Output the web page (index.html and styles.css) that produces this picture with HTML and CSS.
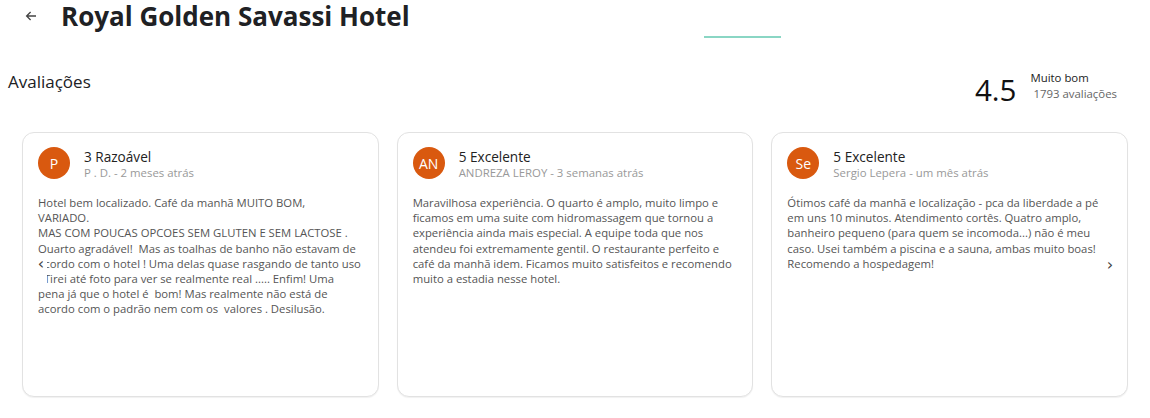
FILE: index.html
```html
<!DOCTYPE html>
<html lang="pt">
<head>
<meta charset="utf-8">
<link rel="stylesheet" href="styles.css">
</head>
<body>
<header class="top">
  <span class="back">
    <svg width="12" height="12" viewBox="0 0 12 12"><path d="M11 6H1.6M5.6 2L1.6 6l4 4" fill="none" stroke="#444" stroke-width="1.3"/></svg>
  </span>
  <h1 class="title">Royal Golden Savassi Hotel</h1>
</header>
<div class="tab-line"></div>
<section class="reviews-head">
  <h2 class="reviews-title">Avaliações</h2>
  <div class="score">
    <span class="score-num">4.5</span>
    <div class="score-info">
      <span class="score-label">Muito bom</span>
      <span class="score-count">1793 avaliações</span>
    </div>
  </div>
</section>
<div class="carousel">
  <article class="card">
    <div class="card-head">
      <div class="avatar">P</div>
      <div>
        <div class="rating">3 Razoável</div>
        <div class="meta">P . D. - 2 meses atrás</div>
      </div>
    </div>
    <p class="text">Hotel bem localizado. Café da manhã MUITO BOM,<br>VARIADO.<br>MAS COM POUCAS OPCOES SEM GLUTEN E SEM LACTOSE .<br>Ouarto agradável!&nbsp; Mas as toalhas de banho não estavam de<br>acordo com o hotel ! Uma delas quase rasgando de tanto uso<br>. Tirei até foto para ver se realmente real ..... Enfim! Uma<br>pena já que o hotel é&nbsp; bom! Mas realmente não está de<br>acordo com o padrão nem com os&nbsp; valores . Desilusão.</p>
  </article>
  <article class="card">
    <div class="card-head">
      <div class="avatar">AN</div>
      <div>
        <div class="rating">5 Excelente</div>
        <div class="meta">ANDREZA LEROY - 3 semanas atrás</div>
      </div>
    </div>
    <p class="text">Maravilhosa experiência. O quarto é amplo, muito limpo e<br>ficamos em uma suite com hidromassagem que tornou a<br>experiência ainda mais especial. A equipe toda que nos<br>atendeu foi extremamente gentil. O restaurante perfeito e<br>café da manhã idem. Ficamos muito satisfeitos e recomendo<br>muito a estadia nesse hotel.</p>
  </article>
  <article class="card">
    <div class="card-head">
      <div class="avatar">Se</div>
      <div>
        <div class="rating">5 Excelente</div>
        <div class="meta">Sergio Lepera - um mês atrás</div>
      </div>
    </div>
    <p class="text">Ótimos café da manhã e localização - pca da liberdade a pé<br>em uns 10 minutos. Atendimento cortês. Quatro amplo,<br>banheiro pequeno (para quem se incomoda...) não é meu<br>caso. Usei também a piscina e a sauna, ambas muito boas!<br>Recomendo a hospedagem!</p>
  </article>
  <button class="arrow arrow-prev">‹</button>
  <button class="arrow arrow-next">›</button>
</div>
</body>
</html>
```
FILE: styles.css
```css
* { box-sizing: border-box; }
body {
  margin: 0;
  font-family: "Open Sans", "Noto Sans", sans-serif;
  color: #222;
  background: #fff;
  width: 1150px;
  height: 418px;
  overflow: hidden;
}
.top {
  display: flex;
  align-items: center;
  height: 32px;
  padding-left: 25px;
}
.back {
  display: flex;
  width: 12px;
  height: 12px;
  margin-right: 24px;
}
.title {
  margin: 0;
  font-size: 26px;
  line-height: 32px;
  font-weight: 700;
  color: #202124;
}
.tab-line {
  margin: 4px 0 0 704px;
  width: 77px;
  height: 2px;
  background: #8ad6c4;
}
.reviews-head {
  display: flex;
  justify-content: space-between;
  align-items: flex-start;
  margin-top: 28px;
  padding: 0 33px 0 8px;
}
.reviews-title {
  margin: 4px 0 0;
  font-size: 17px;
  line-height: 24px;
  font-weight: 400;
  color: #202124;
}
.score {
  display: flex;
  align-items: flex-start;
}
.score-num {
  margin-top: 8px;
  font-size: 29.5px;
  line-height: 32px;
  color: #111;
  margin-right: 14px;
}
.score-info {
  display: flex;
  flex-direction: column;
  margin-top: 4px;
  font-size: 11.4px;
  line-height: 16px;
}
.score-label { color: #222; }
.score-count { color: #666; padding-left: 3px; }
.carousel {
  position: relative;
  display: flex;
  gap: 18px;
  margin-top: 26px;
  padding: 0 22px;
}
.card {
  flex: 1;
  height: 265px;
  border: 1px solid #e2e2e2;
  border-radius: 12px;
  padding: 14px 15px;
  box-shadow: 0 1px 1px rgba(0,0,0,0.06);
  background: #fff;
}
.card-head {
  display: flex;
  align-items: flex-start;
}
.avatar {
  flex: none;
  width: 32px;
  height: 32px;
  border-radius: 50%;
  background: #d9590f;
  color: #fff;
  font-size: 14px;
  display: flex;
  align-items: center;
  justify-content: center;
  margin-right: 14px;
}
.rating {
  font-size: 13.6px;
  line-height: 18px;
  margin-top: 1px;
  color: #222;
}
.meta {
  font-size: 11.4px;
  line-height: 14px;
  color: #999;
}
.text {
  margin: 15px 0 0;
  font-size: 11.3px;
  line-height: 15.2px;
  color: #555;
  white-space: nowrap;
}
.arrow {
  position: absolute;
  border: 0;
  background: #fff;
  padding: 0;
  font-family: "DejaVu Sans", sans-serif;
  font-size: 16px;
  line-height: 18px;
  width: 12px;
  height: 28px;
  color: #444;
  text-align: center;
  vertical-align: top;
  display: flex;
  justify-content: center;
  align-items: flex-start;
}
.arrow-prev { left: 35px; top: 123px; }
.arrow-next { left: 1104px; top: 124px; background: transparent; }
```
